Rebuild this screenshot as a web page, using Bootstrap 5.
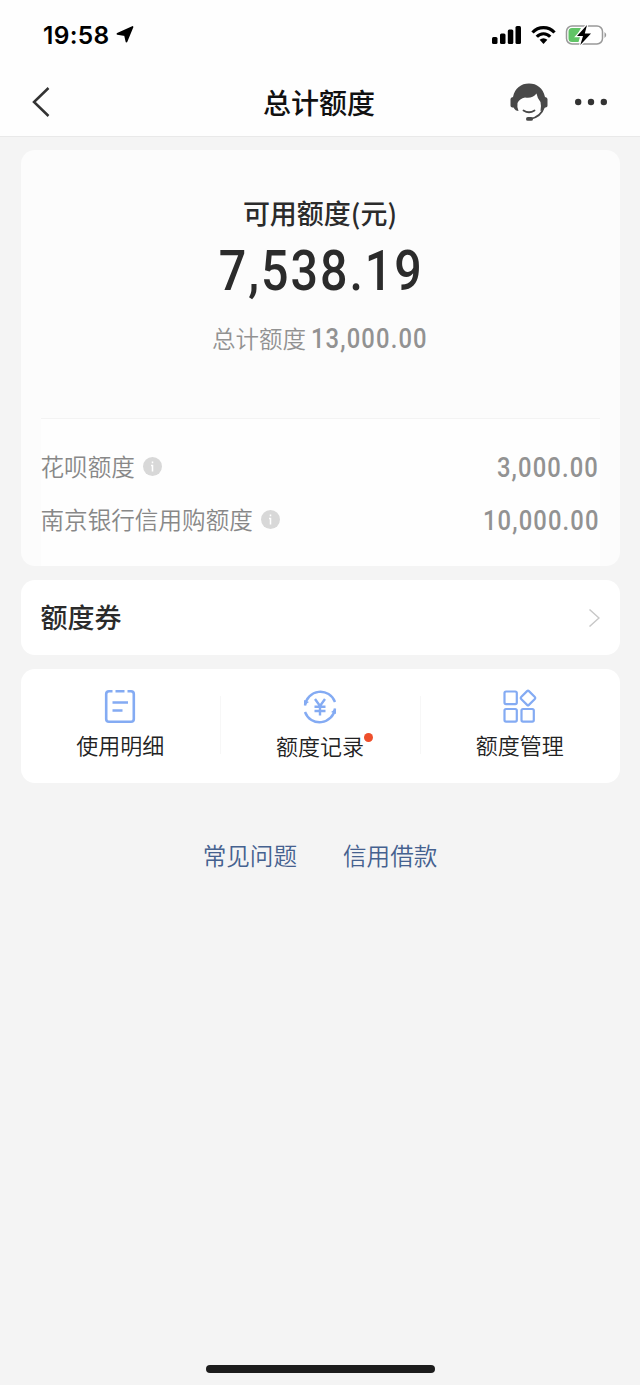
<!DOCTYPE html>
<html lang="zh-CN">
<head>
<meta charset="utf-8">
<meta name="viewport" content="width=device-width, initial-scale=1">
<title>总计额度</title>
<link rel="stylesheet" href="https://cdn.jsdelivr.net/npm/bootstrap@5.3.0/dist/css/bootstrap.min.css">
<style>
body{background:#f4f4f4;color:#2b2b2b;font-family:"Noto Sans CJK SC",sans-serif;min-height:1385px}
svg{display:block;flex:none}
.top-area{background:#fefefe;height:137px;border-bottom:1px solid #e9e9e9}
.status-row{height:68px;padding:2px 33px 0 43px}
.clock{font:600 24.5px/30px Inter,sans-serif;color:#000;letter-spacing:.3px;width:69px;white-space:nowrap}
.title-row{height:68px;padding:0 33px 0 31px}
.page-title{font-size:28px;line-height:40px;font-weight:500;color:#111;margin:0}
.side{width:120px}
.panel{background:#fff;border-radius:14px}
.summary{background:#fcfcfc;height:416px;padding:0 20px}
.overview{height:268px;padding-top:43px}
.avail{font-size:27px;line-height:40px;font-weight:500}
.num{display:inline-block;font-family:Roboto,sans-serif;font-weight:500;transform:scaleX(.88)}
.amount{font-size:55px;line-height:64px;letter-spacing:2.2px;margin-top:6px;padding-left:2px}
.total{font-size:23.5px;line-height:36px;font-weight:350;color:#929292;margin-top:17px}
.total .num,.quota .num{font-size:27px;color:#929292;letter-spacing:1.3px}
.total .num{margin:0 -8px}
.quota .num{transform-origin:right;padding-top:4px}
.breakdown{background:#fefefe;border-top:1px solid #f3f3f3;height:148px;padding-top:21px}
.quota{height:53px;font-size:23.6px;font-weight:350;color:#888}
.coupon{height:75px;padding:0 20px;font-size:27px;font-weight:500}
.actions{height:114px;padding-top:19px}
.action{font-size:22px;line-height:32px;color:#222;font-weight:350}
.action+.action::before{content:"";position:absolute;left:0;top:8px;width:1px;height:58px;background:#f7f7f7}
.dot{position:absolute;width:9px;height:9px;border-radius:50%;background:#ee4f2c;right:-9px;top:4px}
.links{font-size:23.6px;line-height:36px;gap:46px;margin-top:40px;font-weight:350}
.links a{color:#45618f;text-decoration:none}
.home-bar{width:229px;height:8px;border-radius:4px;background:#1c1c1c;margin-bottom:12px}
</style>
</head>
<body class="d-flex flex-column">
<header class="top-area">
  <div class="status-row d-flex align-items-center justify-content-between">
    <div class="d-flex align-items-center">
      <span class="clock">19:58</span>
      <svg style="margin-left:3px" width="22" height="20" viewBox="0 0 22 20"><path d="M17.500 2 11.500 16.500 10 10 2.500 8.800Z" fill="#000" stroke="#000" stroke-width="1.800" stroke-linejoin="round"/></svg>
    </div>
    <div class="d-flex align-items-center">
      <svg width="29" height="20" viewBox="0 0 29 20"><rect y="12" width="5.500" height="7" rx="1.500"/><rect x="8" y="8.500" width="5.500" height="10.500" rx="1.500"/><rect x="15.800" y="4.500" width="5.500" height="14.500" rx="1.500"/><rect x="23.500" y="1" width="5.500" height="18" rx="1.500"/></svg>
      <svg style="margin-left:10px" width="25" height="20" viewBox="0 0 25 20"><g fill="none" stroke="#000" stroke-width="3.200"><path d="M1.500 7.500C7.500 1 17.500 1 23.500 7.500"/><path d="M5.800 11.800C9.500 7.700 15.500 7.700 19.200 11.800"/></g><path d="M8.600 14.700Q12.500 11.700 16.400 14.700L12.500 19Z"/></svg>
      <svg style="margin-left:9px" width="42" height="22" viewBox="0 0 42 22"><rect x="1.500" y="2" width="36" height="18" rx="5.500" fill="#fff" stroke="#999" stroke-width="1.500"/><path d="M7 4H16L11 13H15L13.500 18H7Q3.500 18 3.500 14.500V7.500Q3.500 4 7 4Z" fill="#61c466"/><path d="M39.500 8Q43 11 39.500 14Z" fill="#999"/><path d="M22 1 12 12H18L15.300 21 26 9.500H19.800Z" stroke="#fff" stroke-width="2.500" paint-order="stroke"/></svg>
    </div>
  </div>
  <nav class="title-row d-flex align-items-center justify-content-between">
    <div class="side"><svg width="20" height="32" viewBox="0 0 20 32"><path d="M17.500 2 3 16 17.500 30" fill="none" stroke="#333" stroke-width="2.500"/></svg></div>
    <h1 class="page-title">总计额度</h1>
    <div class="side d-flex align-items-center justify-content-end">
      <svg width="38" height="38" viewBox="0 0 38 38"><path d="M3 14C5 5 11 .500 19 .500S33 5 35 14Q37.500 14.500 37.500 16V22.500Q37.500 24.500 34.500 24.500Q33 28 30.500 28Q31.500 23 30.500 19Q27.500 16 26.500 10.500Q22 16 15 14.500Q9.500 15.500 7.500 20Q6.800 24 8.500 28Q5.500 28 3.500 24.500Q.500 24.500 .500 22.500V16Q.500 14.500 3 14Z" fill="#484848"/><path d="M13.500 27.500Q19 31 24.500 27.500M34 24Q31 34 20 36" fill="none" stroke="#484848" stroke-width="1.800" stroke-linecap="round"/><rect x="16" y="34" width="7" height="3.800" rx="1.900" fill="#484848"/></svg>
      <svg style="margin-left:27px" width="32" height="8" viewBox="0 0 32 8" fill="#333"><circle cx="3.200" cy="4" r="3.200"/><circle cx="16" cy="4" r="3.200"/><circle cx="28.800" cy="4" r="3.200"/></svg>
    </div>
  </nav>
</header>
<main class="d-flex flex-column" style="padding:13px 20.500px 0;gap:14px">
  <section class="panel summary">
    <div class="overview text-center">
      <div class="avail">可用额度(元)</div>
      <div><span class="amount num">7,538.19</span></div>
      <div class="total">总计额度 <span class="num">13,000.00</span></div>
    </div>
    <div class="breakdown">
      <div class="quota d-flex align-items-center"><span>花呗额度</span>
        <svg class="ms-2" width="19" height="19" viewBox="0 0 19 19"><circle cx="9.500" cy="9.500" r="9.500" fill="#d8d8d8"/><path d="M9.500 4.500V6.300M8 8.500H9.500V14.500" fill="none" stroke="#fff" stroke-width="1.500"/></svg>
        <span class="num ms-auto">3,000.00</span></div>
      <div class="quota d-flex align-items-center"><span>南京银行信用购额度</span>
        <svg class="ms-2" width="19" height="19" viewBox="0 0 19 19"><circle cx="9.500" cy="9.500" r="9.500" fill="#d8d8d8"/><path d="M9.500 4.500V6.300M8 8.500H9.500V14.500" fill="none" stroke="#fff" stroke-width="1.500"/></svg>
        <span class="num ms-auto">10,000.00</span></div>
    </div>
  </section>
  <section class="panel coupon d-flex align-items-center justify-content-between">
    <span>额度券</span>
    <svg width="12" height="20" viewBox="0 0 12 20"><path d="M1.500 1.500 11 10 1.500 18.500" fill="none" stroke="#c8c8c8" stroke-width="1.500"/></svg>
  </section>
  <section class="panel actions">
    <div class="row g-0 text-center">
      <div class="col action position-relative">
        <svg class="mx-auto" width="36" height="40" viewBox="0 0 36 40" fill="none" stroke="#84abf3" stroke-width="2.600"><path d="M10.500 3.200H7Q4.200 3.200 4.200 6V31Q4.200 33.800 7 33.800H29Q31.800 33.800 31.800 31V6Q31.800 3.200 29 3.200H25.500M13.500 3.200H22.500M10.500 14.500H26M10.500 22.500H20.500"/></svg>
        <div>使用明细</div>
      </div>
      <div class="col action position-relative">
        <svg class="mx-auto" width="36" height="41" viewBox="0 0 36 41" fill="none" stroke="#84abf3" stroke-width="2.400"><path d="M3 17.500A15.500 15.500 0 0 1 33 14M33 20.500A15.500 15.500 0 0 1 3 24"/><path d="M2 12V17.500L7 14ZM34 26V20.500L29 24Z" fill="#84abf3" stroke="none"/><path d="M13 11 18 18 23 11M18 17.500V27.500M12.500 18.800H23.500M12.500 23H23.500"/></svg>
        <span class="d-inline-block position-relative">额度记录<i class="dot"></i></span>
      </div>
      <div class="col action position-relative">
        <svg class="mx-auto" width="36" height="40" viewBox="0 0 36 40" fill="none" stroke="#84abf3" stroke-width="2.200"><rect x="2.500" y="3.500" width="12.300" height="12.600" rx="1.500"/><rect x="2.500" y="21" width="12.300" height="12.600" rx="1.500"/><rect x="19.500" y="21" width="12.300" height="12.600" rx="1.500"/><rect x="20.500" y="4.500" width="11" height="11" rx="1.300" transform="rotate(45 26 10)"/></svg>
        <div>额度管理</div>
      </div>
    </div>
  </section>
  <div class="links d-flex justify-content-center"><a href="#">常见问题</a><a href="#">信用借款</a></div>
</main>
<div class="home-bar mt-auto mx-auto"></div>
<script src="https://cdn.jsdelivr.net/npm/bootstrap@5.3.0/dist/js/bootstrap.bundle.min.js"></script>
</body>
</html>
